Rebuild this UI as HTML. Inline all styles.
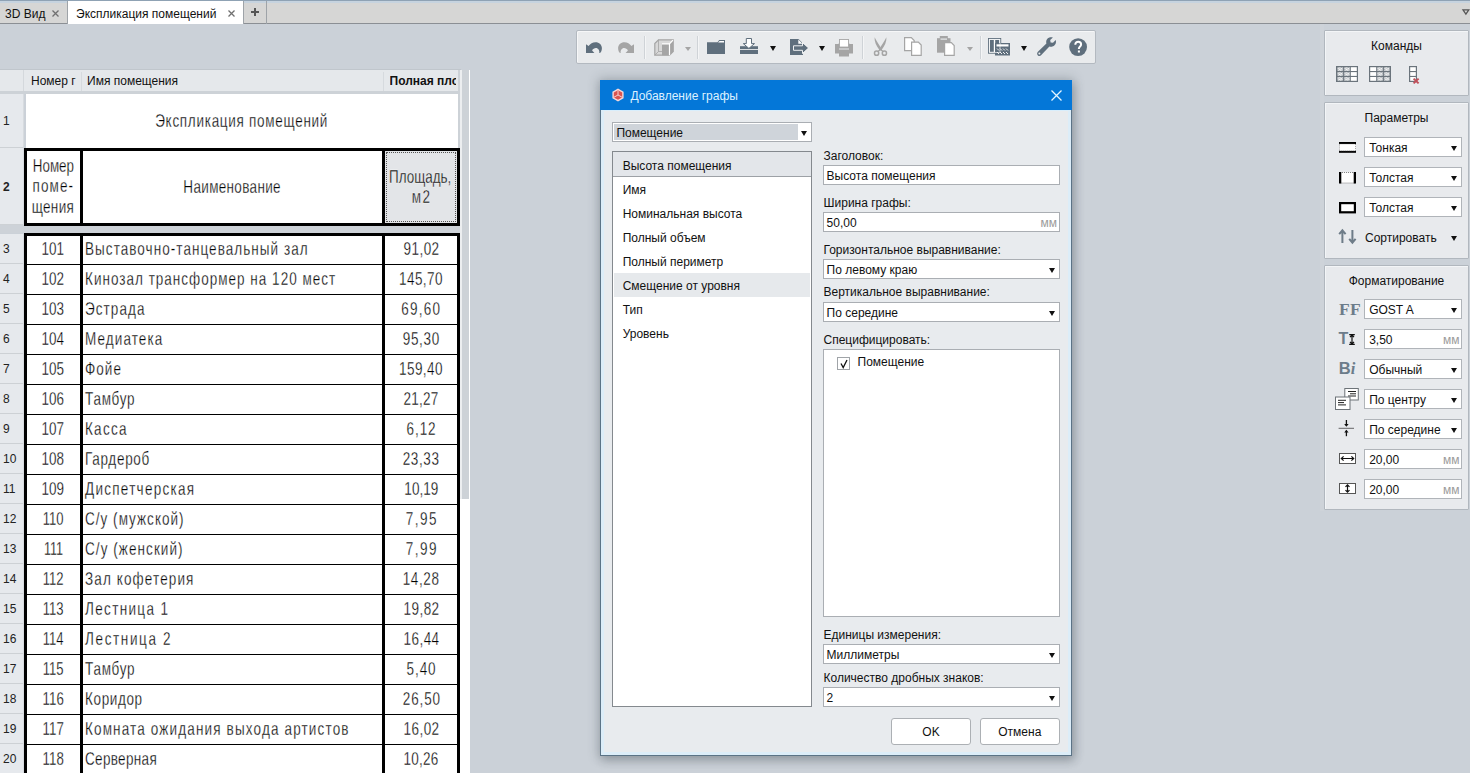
<!DOCTYPE html>
<html><head><meta charset="utf-8">
<style>
*{box-sizing:border-box;margin:0;padding:0}
html,body{width:1470px;height:773px;overflow:hidden}
body{background:#cbd1d8;font-family:"Liberation Sans",sans-serif;font-size:12px;color:#111;position:relative}
.a{position:absolute}
.t{position:absolute;white-space:nowrap;line-height:1}
svg{overflow:visible}
</style></head><body>

<div class="a" style="left:0px;top:0px;width:1470px;height:24px;background:#d6d6d5"></div>
<div class="a" style="left:0px;top:0px;width:1470px;height:1px;background:#8fa2b4"></div>
<div class="a" style="left:0px;top:1px;width:1470px;height:2px;background:#c6d3df"></div>
<div class="a" style="left:0px;top:23px;width:1470px;height:1px;background:#8b8f94"></div>
<div class="a" style="left:67px;top:1px;width:1px;height:23px;background:#9ea3a8"></div>
<div class="t " style="left:5px;top:7.84px;font-size:12px;color:#111;font-weight:normal;">3D Вид</div>
<svg class="a" style="left:52px;top:10px;" width="7" height="7" viewBox="0 0 7 7"><path d="M0.5 0.5L6.5 6.5M6.5 0.5L0.5 6.5" stroke="#707070" stroke-width="1.3"/></svg>
<div class="a" style="left:68px;top:1px;width:175px;height:23px;background:#fff"></div>
<div class="t " style="left:76px;top:7.84px;font-size:12px;color:#111;font-weight:normal;">Экспликация помещений</div>
<svg class="a" style="left:228px;top:10px;" width="7" height="7" viewBox="0 0 7 7"><path d="M0.5 0.5L6.5 6.5M6.5 0.5L0.5 6.5" stroke="#707070" stroke-width="1.3"/></svg>
<div class="a" style="left:243px;top:1px;width:1px;height:23px;background:#9ea3a8"></div>
<div class="a" style="left:266px;top:1px;width:1px;height:23px;background:#9ea3a8"></div>
<svg class="a" style="left:251px;top:8px;" width="8" height="8" viewBox="0 0 8 8"><path d="M4 0V8M0 4H8" stroke="#555" stroke-width="2"/></svg>
<svg class="a" style="left:1462px;top:9px;" width="8" height="6" viewBox="0 0 8 6"><path d="M1 0.9H6.8L3.9 5.2Z" fill="none" stroke="#555" stroke-width="1.3"/></svg>
<div class="a" style="left:0px;top:69px;width:461px;height:1px;background:#c0c6cc"></div>
<div class="a" style="left:0px;top:70px;width:458px;height:21px;background:#e5e8eb"></div>
<div class="a" style="left:0px;top:91px;width:458px;height:3px;background:#cdd2d7"></div>
<div class="a" style="left:23px;top:70px;width:1px;height:21px;background:#d4d8dc"></div>
<div class="a" style="left:81px;top:72px;width:1px;height:19px;background:#d6dade"></div>
<div class="a" style="left:383px;top:72px;width:1px;height:19px;background:#d6dade"></div>
<div class="t " style="left:31px;top:74.84px;font-size:12px;color:#111;font-weight:normal;">Номер г</div>
<div class="t " style="left:87px;top:74.84px;font-size:12px;color:#111;font-weight:normal;">Имя помещения</div>
<div class="t" style="left:389.5px;top:74.8px;width:66.5px;overflow:hidden;font-size:12px;font-weight:bold;color:#111">Полная площадь</div>
<div class="a" style="left:458px;top:70px;width:2px;height:703px;background:#cdd2d7"></div>
<div class="a" style="left:460px;top:70px;width:10px;height:703px;background:#fff"></div>
<div class="a" style="left:460px;top:70px;width:2px;height:429px;background:#eceef0"></div>
<div class="a" style="left:462px;top:70px;width:7px;height:429px;background:#cdd2d7"></div>
<div class="a" style="left:0px;top:94px;width:23px;height:54px;background:#e6e9ed"></div>
<div class="a" style="left:0px;top:147px;width:24px;height:1px;background:#cdd1d5"></div>
<div class="a" style="left:23px;top:94px;width:1px;height:54px;background:#d7dbdf"></div>
<div class="t " style="left:3px;top:115.14px;font-size:12px;color:#222;font-weight:normal;">1</div>
<div class="a" style="left:0px;top:148px;width:23px;height:77px;background:#e6e9ed"></div>
<div class="a" style="left:0px;top:224px;width:24px;height:1px;background:#cdd1d5"></div>
<div class="a" style="left:23px;top:148px;width:1px;height:77px;background:#d7dbdf"></div>
<div class="t " style="left:3px;top:180.64px;font-size:12px;color:#222;font-weight:bold;">2</div>
<div class="a" style="left:0px;top:225px;width:458px;height:8px;background:#cdd2d8"></div>
<div class="a" style="left:0px;top:234px;width:23px;height:30px;background:#e6e9ed"></div>
<div class="a" style="left:0px;top:263px;width:24px;height:1px;background:#cdd1d5"></div>
<div class="a" style="left:23px;top:234px;width:1px;height:30px;background:#d7dbdf"></div>
<div class="t " style="left:3px;top:243.14px;font-size:12px;color:#222;font-weight:normal;">3</div>
<div class="a" style="left:0px;top:264px;width:23px;height:30px;background:#e6e9ed"></div>
<div class="a" style="left:0px;top:293px;width:24px;height:1px;background:#cdd1d5"></div>
<div class="a" style="left:23px;top:264px;width:1px;height:30px;background:#d7dbdf"></div>
<div class="t " style="left:3px;top:273.14px;font-size:12px;color:#222;font-weight:normal;">4</div>
<div class="a" style="left:0px;top:294px;width:23px;height:30px;background:#e6e9ed"></div>
<div class="a" style="left:0px;top:323px;width:24px;height:1px;background:#cdd1d5"></div>
<div class="a" style="left:23px;top:294px;width:1px;height:30px;background:#d7dbdf"></div>
<div class="t " style="left:3px;top:303.14px;font-size:12px;color:#222;font-weight:normal;">5</div>
<div class="a" style="left:0px;top:324px;width:23px;height:30px;background:#e6e9ed"></div>
<div class="a" style="left:0px;top:353px;width:24px;height:1px;background:#cdd1d5"></div>
<div class="a" style="left:23px;top:324px;width:1px;height:30px;background:#d7dbdf"></div>
<div class="t " style="left:3px;top:333.14px;font-size:12px;color:#222;font-weight:normal;">6</div>
<div class="a" style="left:0px;top:354px;width:23px;height:30px;background:#e6e9ed"></div>
<div class="a" style="left:0px;top:383px;width:24px;height:1px;background:#cdd1d5"></div>
<div class="a" style="left:23px;top:354px;width:1px;height:30px;background:#d7dbdf"></div>
<div class="t " style="left:3px;top:363.14px;font-size:12px;color:#222;font-weight:normal;">7</div>
<div class="a" style="left:0px;top:384px;width:23px;height:30px;background:#e6e9ed"></div>
<div class="a" style="left:0px;top:413px;width:24px;height:1px;background:#cdd1d5"></div>
<div class="a" style="left:23px;top:384px;width:1px;height:30px;background:#d7dbdf"></div>
<div class="t " style="left:3px;top:393.14px;font-size:12px;color:#222;font-weight:normal;">8</div>
<div class="a" style="left:0px;top:414px;width:23px;height:30px;background:#e6e9ed"></div>
<div class="a" style="left:0px;top:443px;width:24px;height:1px;background:#cdd1d5"></div>
<div class="a" style="left:23px;top:414px;width:1px;height:30px;background:#d7dbdf"></div>
<div class="t " style="left:3px;top:423.14px;font-size:12px;color:#222;font-weight:normal;">9</div>
<div class="a" style="left:0px;top:444px;width:23px;height:30px;background:#e6e9ed"></div>
<div class="a" style="left:0px;top:473px;width:24px;height:1px;background:#cdd1d5"></div>
<div class="a" style="left:23px;top:444px;width:1px;height:30px;background:#d7dbdf"></div>
<div class="t " style="left:3px;top:453.14px;font-size:12px;color:#222;font-weight:normal;">10</div>
<div class="a" style="left:0px;top:474px;width:23px;height:30px;background:#e6e9ed"></div>
<div class="a" style="left:0px;top:503px;width:24px;height:1px;background:#cdd1d5"></div>
<div class="a" style="left:23px;top:474px;width:1px;height:30px;background:#d7dbdf"></div>
<div class="t " style="left:3px;top:483.14px;font-size:12px;color:#222;font-weight:normal;">11</div>
<div class="a" style="left:0px;top:504px;width:23px;height:30px;background:#e6e9ed"></div>
<div class="a" style="left:0px;top:533px;width:24px;height:1px;background:#cdd1d5"></div>
<div class="a" style="left:23px;top:504px;width:1px;height:30px;background:#d7dbdf"></div>
<div class="t " style="left:3px;top:513.14px;font-size:12px;color:#222;font-weight:normal;">12</div>
<div class="a" style="left:0px;top:534px;width:23px;height:30px;background:#e6e9ed"></div>
<div class="a" style="left:0px;top:563px;width:24px;height:1px;background:#cdd1d5"></div>
<div class="a" style="left:23px;top:534px;width:1px;height:30px;background:#d7dbdf"></div>
<div class="t " style="left:3px;top:543.14px;font-size:12px;color:#222;font-weight:normal;">13</div>
<div class="a" style="left:0px;top:564px;width:23px;height:30px;background:#e6e9ed"></div>
<div class="a" style="left:0px;top:593px;width:24px;height:1px;background:#cdd1d5"></div>
<div class="a" style="left:23px;top:564px;width:1px;height:30px;background:#d7dbdf"></div>
<div class="t " style="left:3px;top:573.14px;font-size:12px;color:#222;font-weight:normal;">14</div>
<div class="a" style="left:0px;top:594px;width:23px;height:30px;background:#e6e9ed"></div>
<div class="a" style="left:0px;top:623px;width:24px;height:1px;background:#cdd1d5"></div>
<div class="a" style="left:23px;top:594px;width:1px;height:30px;background:#d7dbdf"></div>
<div class="t " style="left:3px;top:603.14px;font-size:12px;color:#222;font-weight:normal;">15</div>
<div class="a" style="left:0px;top:624px;width:23px;height:30px;background:#e6e9ed"></div>
<div class="a" style="left:0px;top:653px;width:24px;height:1px;background:#cdd1d5"></div>
<div class="a" style="left:23px;top:624px;width:1px;height:30px;background:#d7dbdf"></div>
<div class="t " style="left:3px;top:633.14px;font-size:12px;color:#222;font-weight:normal;">16</div>
<div class="a" style="left:0px;top:654px;width:23px;height:30px;background:#e6e9ed"></div>
<div class="a" style="left:0px;top:683px;width:24px;height:1px;background:#cdd1d5"></div>
<div class="a" style="left:23px;top:654px;width:1px;height:30px;background:#d7dbdf"></div>
<div class="t " style="left:3px;top:663.14px;font-size:12px;color:#222;font-weight:normal;">17</div>
<div class="a" style="left:0px;top:684px;width:23px;height:30px;background:#e6e9ed"></div>
<div class="a" style="left:0px;top:713px;width:24px;height:1px;background:#cdd1d5"></div>
<div class="a" style="left:23px;top:684px;width:1px;height:30px;background:#d7dbdf"></div>
<div class="t " style="left:3px;top:693.14px;font-size:12px;color:#222;font-weight:normal;">18</div>
<div class="a" style="left:0px;top:714px;width:23px;height:30px;background:#e6e9ed"></div>
<div class="a" style="left:0px;top:743px;width:24px;height:1px;background:#cdd1d5"></div>
<div class="a" style="left:23px;top:714px;width:1px;height:30px;background:#d7dbdf"></div>
<div class="t " style="left:3px;top:723.14px;font-size:12px;color:#222;font-weight:normal;">19</div>
<div class="a" style="left:0px;top:744px;width:23px;height:30px;background:#e6e9ed"></div>
<div class="a" style="left:0px;top:773px;width:24px;height:1px;background:#cdd1d5"></div>
<div class="a" style="left:23px;top:744px;width:1px;height:30px;background:#d7dbdf"></div>
<div class="t " style="left:3px;top:753.14px;font-size:12px;color:#222;font-weight:normal;">20</div>
<div class="a" style="left:26px;top:94px;width:432px;height:54px;background:#fff"></div>
<div class="t" style="left:127.71px;top:113.43px;width:227.51px;font-size:17.8px;letter-spacing:0.931px;color:#000;-webkit-text-stroke:0.3px #fff;transform:scaleX(0.7600);transform-origin:113.29px 0">Экспликация помещений</div>
<div class="a" style="left:24px;top:148px;width:436px;height:78px;background:#fff"></div>
<div class="a" style="left:385px;top:151px;width:72px;height:72px;background:#e3e5e8"></div>
<div class="a" style="left:386px;top:152px;width:70px;height:70px;border:1px dotted #555"></div>
<div class="a" style="left:24px;top:148px;width:436px;height:3px;background:#000"></div>
<div class="a" style="left:24px;top:223px;width:436px;height:3px;background:#000"></div>
<div class="a" style="left:24px;top:148px;width:3px;height:78px;background:#000"></div>
<div class="a" style="left:457px;top:148px;width:3px;height:78px;background:#000"></div>
<div class="a" style="left:80px;top:148px;width:3px;height:78px;background:#000"></div>
<div class="a" style="left:382px;top:148px;width:3px;height:78px;background:#000"></div>
<div class="t" style="left:25.63px;top:158.13px;width:54.73px;font-size:17.8px;letter-spacing:0.000px;color:#000;-webkit-text-stroke:0.3px #fff;transform:scaleX(0.7527);transform-origin:27.37px 0">Номер</div>
<div class="t" style="left:26.22px;top:178.33px;width:55.05px;font-size:17.8px;letter-spacing:1.498px;color:#000;-webkit-text-stroke:0.3px #fff;transform:scaleX(0.7600);transform-origin:26.78px 0">поме-</div>
<div class="t" style="left:25.24px;top:198.53px;width:55.98px;font-size:17.8px;letter-spacing:0.456px;color:#000;-webkit-text-stroke:0.3px #fff;transform:scaleX(0.7600);transform-origin:27.76px 0">щения</div>
<div class="t" style="left:168.05px;top:178.93px;width:128.32px;font-size:17.8px;letter-spacing:0.421px;color:#000;-webkit-text-stroke:0.3px #fff;transform:scaleX(0.7600);transform-origin:63.95px 0">Наименование</div>
<div class="t" style="left:379.33px;top:169.13px;width:82.34px;font-size:17.8px;letter-spacing:0.000px;color:#000;-webkit-text-stroke:0.3px #fff;transform:scaleX(0.7554);transform-origin:41.17px 0">Площадь,</div>
<div class="t" style="left:409.03px;top:188.63px;width:25.77px;font-size:17.8px;letter-spacing:1.822px;color:#000;-webkit-text-stroke:0.3px #fff;transform:scaleX(0.7600);transform-origin:11.97px 0">м2</div>
<div class="a" style="left:24px;top:233px;width:436px;height:540px;background:#fff"></div>
<div class="a" style="left:24px;top:233px;width:436px;height:3px;background:#000"></div>
<div class="a" style="left:24px;top:233px;width:3px;height:540px;background:#000"></div>
<div class="a" style="left:457px;top:233px;width:3px;height:540px;background:#000"></div>
<div class="a" style="left:80px;top:233px;width:3px;height:540px;background:#000"></div>
<div class="a" style="left:382px;top:233px;width:3px;height:540px;background:#000"></div>
<div class="t" style="left:38.46px;top:241.43px;width:29.67px;font-size:17.8px;letter-spacing:0.000px;color:#000;-webkit-text-stroke:0.3px #fff;transform:scaleX(0.7583);transform-origin:14.84px 0">101</div>
<div class="t" style="left:84.9px;top:241.43px;font-size:17.8px;letter-spacing:1.378px;color:#000;-webkit-text-stroke:0.3px #fff;transform:scaleX(0.7600);transform-origin:0 0">Выставочно-танцевальный зал</div>
<div class="t" style="left:397.64px;top:241.43px;width:47.26px;font-size:17.8px;letter-spacing:0.553px;color:#000;-webkit-text-stroke:0.3px #fff;transform:scaleX(0.7600);transform-origin:23.36px 0">91,02</div>
<div class="a" style="left:27px;top:263.5px;width:430px;height:1.5px;background:#000"></div>
<div class="t" style="left:38.46px;top:271.43px;width:29.67px;font-size:17.8px;letter-spacing:0.000px;color:#000;-webkit-text-stroke:0.3px #fff;transform:scaleX(0.7583);transform-origin:14.84px 0">102</div>
<div class="t" style="left:84.9px;top:271.43px;font-size:17.8px;letter-spacing:1.322px;color:#000;-webkit-text-stroke:0.3px #fff;transform:scaleX(0.7600);transform-origin:0 0">Кинозал трансформер на 120 мест</div>
<div class="t" style="left:392.25px;top:271.43px;width:58.12px;font-size:17.8px;letter-spacing:0.622px;color:#000;-webkit-text-stroke:0.3px #fff;transform:scaleX(0.7600);transform-origin:28.75px 0">145,70</div>
<div class="a" style="left:27px;top:293.5px;width:430px;height:1.5px;background:#000"></div>
<div class="t" style="left:38.46px;top:301.43px;width:29.67px;font-size:17.8px;letter-spacing:0.000px;color:#000;-webkit-text-stroke:0.3px #fff;transform:scaleX(0.7583);transform-origin:14.84px 0">103</div>
<div class="t" style="left:84.9px;top:301.43px;font-size:17.8px;letter-spacing:1.383px;color:#000;-webkit-text-stroke:0.3px #fff;transform:scaleX(0.7600);transform-origin:0 0">Эстрада</div>
<div class="t" style="left:395.47px;top:301.43px;width:52.69px;font-size:17.8px;letter-spacing:1.638px;color:#000;-webkit-text-stroke:0.3px #fff;transform:scaleX(0.7600);transform-origin:25.53px 0">69,60</div>
<div class="a" style="left:27px;top:323.5px;width:430px;height:1.5px;background:#000"></div>
<div class="t" style="left:38.46px;top:331.43px;width:29.67px;font-size:17.8px;letter-spacing:0.000px;color:#000;-webkit-text-stroke:0.3px #fff;transform:scaleX(0.7583);transform-origin:14.84px 0">104</div>
<div class="t" style="left:84.9px;top:331.43px;font-size:17.8px;letter-spacing:1.436px;color:#000;-webkit-text-stroke:0.3px #fff;transform:scaleX(0.7600);transform-origin:0 0">Медиатека</div>
<div class="t" style="left:397.05px;top:331.43px;width:48.74px;font-size:17.8px;letter-spacing:0.849px;color:#000;-webkit-text-stroke:0.3px #fff;transform:scaleX(0.7600);transform-origin:23.95px 0">95,30</div>
<div class="a" style="left:27px;top:353.5px;width:430px;height:1.5px;background:#000"></div>
<div class="t" style="left:38.46px;top:361.43px;width:29.67px;font-size:17.8px;letter-spacing:0.000px;color:#000;-webkit-text-stroke:0.3px #fff;transform:scaleX(0.7583);transform-origin:14.84px 0">105</div>
<div class="t" style="left:84.9px;top:361.43px;font-size:17.8px;letter-spacing:1.334px;color:#000;-webkit-text-stroke:0.3px #fff;transform:scaleX(0.7600);transform-origin:0 0">Фойе</div>
<div class="t" style="left:392.25px;top:361.43px;width:58.12px;font-size:17.8px;letter-spacing:0.622px;color:#000;-webkit-text-stroke:0.3px #fff;transform:scaleX(0.7600);transform-origin:28.75px 0">159,40</div>
<div class="a" style="left:27px;top:383.5px;width:430px;height:1.5px;background:#000"></div>
<div class="t" style="left:38.46px;top:391.43px;width:29.67px;font-size:17.8px;letter-spacing:0.000px;color:#000;-webkit-text-stroke:0.3px #fff;transform:scaleX(0.7583);transform-origin:14.84px 0">106</div>
<div class="t" style="left:84.9px;top:391.43px;font-size:17.8px;letter-spacing:0.981px;color:#000;-webkit-text-stroke:0.3px #fff;transform:scaleX(0.7600);transform-origin:0 0">Тамбур</div>
<div class="t" style="left:398.11px;top:391.43px;width:46.11px;font-size:17.8px;letter-spacing:0.322px;color:#000;-webkit-text-stroke:0.3px #fff;transform:scaleX(0.7600);transform-origin:22.89px 0">21,27</div>
<div class="a" style="left:27px;top:413.5px;width:430px;height:1.5px;background:#000"></div>
<div class="t" style="left:38.46px;top:421.43px;width:29.67px;font-size:17.8px;letter-spacing:0.000px;color:#000;-webkit-text-stroke:0.3px #fff;transform:scaleX(0.7583);transform-origin:14.84px 0">107</div>
<div class="t" style="left:84.9px;top:421.43px;font-size:17.8px;letter-spacing:1.638px;color:#000;-webkit-text-stroke:0.3px #fff;transform:scaleX(0.7600);transform-origin:0 0">Касса</div>
<div class="t" style="left:401.92px;top:421.43px;width:39.34px;font-size:17.8px;letter-spacing:1.183px;color:#000;-webkit-text-stroke:0.3px #fff;transform:scaleX(0.7600);transform-origin:19.08px 0">6,12</div>
<div class="a" style="left:27px;top:443.5px;width:430px;height:1.5px;background:#000"></div>
<div class="t" style="left:38.46px;top:451.43px;width:29.67px;font-size:17.8px;letter-spacing:0.000px;color:#000;-webkit-text-stroke:0.3px #fff;transform:scaleX(0.7583);transform-origin:14.84px 0">108</div>
<div class="t" style="left:84.9px;top:451.43px;font-size:17.8px;letter-spacing:0.910px;color:#000;-webkit-text-stroke:0.3px #fff;transform:scaleX(0.7600);transform-origin:0 0">Гардероб</div>
<div class="t" style="left:397.18px;top:451.43px;width:48.41px;font-size:17.8px;letter-spacing:0.783px;color:#000;-webkit-text-stroke:0.3px #fff;transform:scaleX(0.7600);transform-origin:23.82px 0">23,33</div>
<div class="a" style="left:27px;top:473.5px;width:430px;height:1.5px;background:#000"></div>
<div class="t" style="left:38.46px;top:481.43px;width:29.67px;font-size:17.8px;letter-spacing:0.000px;color:#000;-webkit-text-stroke:0.3px #fff;transform:scaleX(0.7583);transform-origin:14.84px 0">109</div>
<div class="t" style="left:84.9px;top:481.43px;font-size:17.8px;letter-spacing:1.655px;color:#000;-webkit-text-stroke:0.3px #fff;transform:scaleX(0.7600);transform-origin:0 0">Диспетчерская</div>
<div class="t" style="left:398.70px;top:481.43px;width:44.63px;font-size:17.8px;letter-spacing:0.026px;color:#000;-webkit-text-stroke:0.3px #fff;transform:scaleX(0.7600);transform-origin:22.30px 0">10,19</div>
<div class="a" style="left:27px;top:503.5px;width:430px;height:1.5px;background:#000"></div>
<div class="t" style="left:39.12px;top:511.43px;width:28.36px;font-size:17.8px;letter-spacing:0.000px;color:#000;-webkit-text-stroke:0.3px #fff;transform:scaleX(0.7334);transform-origin:14.18px 0">110</div>
<div class="t" style="left:84.9px;top:511.43px;font-size:17.8px;letter-spacing:1.348px;color:#000;-webkit-text-stroke:0.3px #fff;transform:scaleX(0.7600);transform-origin:0 0">С/у (мужской)</div>
<div class="t" style="left:400.87px;top:511.43px;width:42.15px;font-size:17.8px;letter-spacing:1.885px;color:#000;-webkit-text-stroke:0.3px #fff;transform:scaleX(0.7600);transform-origin:20.13px 0">7,95</div>
<div class="a" style="left:27px;top:533.5px;width:430px;height:1.5px;background:#000"></div>
<div class="t" style="left:39.78px;top:541.43px;width:27.03px;font-size:17.8px;letter-spacing:0.000px;color:#000;-webkit-text-stroke:0.3px #fff;transform:scaleX(0.7103);transform-origin:13.52px 0">111</div>
<div class="t" style="left:84.9px;top:541.43px;font-size:17.8px;letter-spacing:1.402px;color:#000;-webkit-text-stroke:0.3px #fff;transform:scaleX(0.7600);transform-origin:0 0">С/у (женский)</div>
<div class="t" style="left:400.87px;top:541.43px;width:42.15px;font-size:17.8px;letter-spacing:1.885px;color:#000;-webkit-text-stroke:0.3px #fff;transform:scaleX(0.7600);transform-origin:20.13px 0">7,99</div>
<div class="a" style="left:27px;top:563.5px;width:430px;height:1.5px;background:#000"></div>
<div class="t" style="left:39.12px;top:571.43px;width:28.36px;font-size:17.8px;letter-spacing:0.000px;color:#000;-webkit-text-stroke:0.3px #fff;transform:scaleX(0.7334);transform-origin:14.18px 0">112</div>
<div class="t" style="left:84.9px;top:571.43px;font-size:17.8px;letter-spacing:1.467px;color:#000;-webkit-text-stroke:0.3px #fff;transform:scaleX(0.7600);transform-origin:0 0">Зал кофетерия</div>
<div class="t" style="left:397.18px;top:571.43px;width:48.41px;font-size:17.8px;letter-spacing:0.783px;color:#000;-webkit-text-stroke:0.3px #fff;transform:scaleX(0.7600);transform-origin:23.82px 0">14,28</div>
<div class="a" style="left:27px;top:593.5px;width:430px;height:1.5px;background:#000"></div>
<div class="t" style="left:39.12px;top:601.43px;width:28.36px;font-size:17.8px;letter-spacing:0.000px;color:#000;-webkit-text-stroke:0.3px #fff;transform:scaleX(0.7334);transform-origin:14.18px 0">113</div>
<div class="t" style="left:84.9px;top:601.43px;font-size:17.8px;letter-spacing:1.759px;color:#000;-webkit-text-stroke:0.3px #fff;transform:scaleX(0.7600);transform-origin:0 0">Лестница 1</div>
<div class="t" style="left:397.64px;top:601.43px;width:47.26px;font-size:17.8px;letter-spacing:0.553px;color:#000;-webkit-text-stroke:0.3px #fff;transform:scaleX(0.7600);transform-origin:23.36px 0">19,82</div>
<div class="a" style="left:27px;top:623.5px;width:430px;height:1.5px;background:#000"></div>
<div class="t" style="left:39.12px;top:631.43px;width:28.36px;font-size:17.8px;letter-spacing:0.000px;color:#000;-webkit-text-stroke:0.3px #fff;transform:scaleX(0.7334);transform-origin:14.18px 0">114</div>
<div class="t" style="left:84.9px;top:631.43px;font-size:17.8px;letter-spacing:2.139px;color:#000;-webkit-text-stroke:0.3px #fff;transform:scaleX(0.7600);transform-origin:0 0">Лестница 2</div>
<div class="t" style="left:397.64px;top:631.43px;width:47.26px;font-size:17.8px;letter-spacing:0.553px;color:#000;-webkit-text-stroke:0.3px #fff;transform:scaleX(0.7600);transform-origin:23.36px 0">16,44</div>
<div class="a" style="left:27px;top:653.5px;width:430px;height:1.5px;background:#000"></div>
<div class="t" style="left:39.12px;top:661.43px;width:28.36px;font-size:17.8px;letter-spacing:0.000px;color:#000;-webkit-text-stroke:0.3px #fff;transform:scaleX(0.7334);transform-origin:14.18px 0">115</div>
<div class="t" style="left:84.9px;top:661.43px;font-size:17.8px;letter-spacing:0.981px;color:#000;-webkit-text-stroke:0.3px #fff;transform:scaleX(0.7600);transform-origin:0 0">Тамбур</div>
<div class="t" style="left:401.92px;top:661.43px;width:39.34px;font-size:17.8px;letter-spacing:1.183px;color:#000;-webkit-text-stroke:0.3px #fff;transform:scaleX(0.7600);transform-origin:19.08px 0">5,40</div>
<div class="a" style="left:27px;top:683.5px;width:430px;height:1.5px;background:#000"></div>
<div class="t" style="left:39.12px;top:691.43px;width:28.36px;font-size:17.8px;letter-spacing:0.000px;color:#000;-webkit-text-stroke:0.3px #fff;transform:scaleX(0.7475);transform-origin:14.18px 0">116</div>
<div class="t" style="left:84.9px;top:691.43px;font-size:17.8px;letter-spacing:0.816px;color:#000;-webkit-text-stroke:0.3px #fff;transform:scaleX(0.7600);transform-origin:0 0">Коридор</div>
<div class="t" style="left:396.53px;top:691.43px;width:50.06px;font-size:17.8px;letter-spacing:1.112px;color:#000;-webkit-text-stroke:0.3px #fff;transform:scaleX(0.7600);transform-origin:24.47px 0">26,50</div>
<div class="a" style="left:27px;top:713.5px;width:430px;height:1.5px;background:#000"></div>
<div class="t" style="left:39.12px;top:721.43px;width:28.36px;font-size:17.8px;letter-spacing:0.000px;color:#000;-webkit-text-stroke:0.3px #fff;transform:scaleX(0.7475);transform-origin:14.18px 0">117</div>
<div class="t" style="left:84.9px;top:721.43px;font-size:17.8px;letter-spacing:1.509px;color:#000;-webkit-text-stroke:0.3px #fff;transform:scaleX(0.7600);transform-origin:0 0">Комната ожидания выхода артистов</div>
<div class="t" style="left:397.64px;top:721.43px;width:47.26px;font-size:17.8px;letter-spacing:0.553px;color:#000;-webkit-text-stroke:0.3px #fff;transform:scaleX(0.7600);transform-origin:23.36px 0">16,02</div>
<div class="a" style="left:27px;top:743.5px;width:430px;height:1.5px;background:#000"></div>
<div class="t" style="left:39.12px;top:751.43px;width:28.36px;font-size:17.8px;letter-spacing:0.000px;color:#000;-webkit-text-stroke:0.3px #fff;transform:scaleX(0.7475);transform-origin:14.18px 0">118</div>
<div class="t" style="left:84.9px;top:751.43px;font-size:17.8px;letter-spacing:0.420px;color:#000;-webkit-text-stroke:0.3px #fff;transform:scaleX(0.7600);transform-origin:0 0">Серверная</div>
<div class="t" style="left:398.11px;top:751.43px;width:46.11px;font-size:17.8px;letter-spacing:0.322px;color:#000;-webkit-text-stroke:0.3px #fff;transform:scaleX(0.7600);transform-origin:22.89px 0">10,26</div>
<div class="a" style="left:576px;top:30px;width:520px;height:34px;background:#e9ebed;border:1px solid #b3b9c0;border-radius:2px;box-shadow:inset 1px 1px 0 #f6f7f8"></div>
<div class="a" style="left:644px;top:36px;width:1px;height:23px;background:#cfd3d7"></div>
<div class="a" style="left:645px;top:36px;width:1px;height:23px;background:#f4f5f6"></div>
<div class="a" style="left:697px;top:36px;width:1px;height:23px;background:#cfd3d7"></div>
<div class="a" style="left:698px;top:36px;width:1px;height:23px;background:#f4f5f6"></div>
<div class="a" style="left:862px;top:36px;width:1px;height:23px;background:#cfd3d7"></div>
<div class="a" style="left:863px;top:36px;width:1px;height:23px;background:#f4f5f6"></div>
<div class="a" style="left:980px;top:36px;width:1px;height:23px;background:#cfd3d7"></div>
<div class="a" style="left:981px;top:36px;width:1px;height:23px;background:#f4f5f6"></div>
<svg class="a" style="left:586px;top:41.8px;" width="16" height="12" viewBox="0 0 16 12"><path d="M0 2.3 L2.6 4 C4.3 1.5 6.6 0.2 9.5 0.2 C13.3 0.2 15.9 2.8 15.9 6.2 C15.9 8.4 15 10.2 14 11.1 L13.3 11.1 C13.7 8.6 12.2 6.1 9.9 6.1 C8.3 6.1 7 7 6.1 8.4 L8.4 11.1 L0 11.1 Z" fill="#5f6f7d"/></svg>
<svg class="a" style="left:618px;top:41.8px;" width="16" height="12" viewBox="0 0 16 12"><g transform="translate(16,0) scale(-1,1)"><path d="M0 2.3 L2.6 4 C4.3 1.5 6.6 0.2 9.5 0.2 C13.3 0.2 15.9 2.8 15.9 6.2 C15.9 8.4 15 10.2 14 11.1 L13.3 11.1 C13.7 8.6 12.2 6.1 9.9 6.1 C8.3 6.1 7 7 6.1 8.4 L8.4 11.1 L0 11.1 Z" fill="#a5a5a5"/></g></svg>
<svg class="a" style="left:654px;top:39px;" width="20" height="17" viewBox="0 0 20 17"><path d="M0.8 4.5 L4.5 0.8 L19.2 0.8 L19.2 12.5 L15.5 16.2 L0.8 16.2 Z" fill="#d8d8d8" stroke="#a5a5a5" stroke-width="1.2"/><path d="M4.5 0.8 L4.5 12.5 L0.8 16.2 M4.5 12.5 L19.2 12.5" stroke="#a5a5a5" stroke-width="0.8" fill="none"/><path d="M8 5 L15.5 5 L19.2 1 L19.2 12.5 L15.5 16.2 L8 16.2 Z" fill="#a5a5a5"/><path d="M8 4.8 H15.5 V16.2 M15.5 4.8 L19 1.2" stroke="#fff" stroke-width="1.2" fill="none"/></svg>
<svg class="a" style="left:685px;top:47px;" width="7" height="4" viewBox="0 0 7 4"><path d="M0 0H6L3 4Z" fill="#a5a5a5"/></svg>
<svg class="a" style="left:707px;top:40px;" width="18" height="14" viewBox="0 0 18 14"><path d="M0 2.2 H10.5 L12.2 0 H18 V14 H0 Z" fill="#5f6f7d"/><path d="M11.2 2.2 L12.6 1.1 H17 V2.6 H11.2Z" fill="#fff"/></svg>
<svg class="a" style="left:740px;top:38px;" width="18" height="16" viewBox="0 0 18 16"><path d="M0 8.2 H18 V16 H0 Z" fill="#5f6f7d"/><rect x="0" y="11" width="18" height="0.9" fill="#e9ebed"/><path d="M6.3 0.5 H11.5 V5.6 H14.5 L8.9 10.4 L3.3 5.6 H6.3 Z" fill="#fff" stroke="#5f6f7d" stroke-width="1"/></svg>
<svg class="a" style="left:770px;top:46px;" width="6" height="5" viewBox="0 0 6 5"><path d="M0 0H6L3 5Z" fill="#111"/></svg>
<svg class="a" style="left:790px;top:39px;" width="19" height="16" viewBox="0 0 19 16"><path d="M0 0 H8.5 L13 4.5 V16 H0 Z" fill="#5f6f7d"/><path d="M8.3 0.6 L12.4 4.7 H8.3Z" fill="#fff"/><path d="M3.5 6.8 H12.5 V3.5 L18.6 9 L12.5 14.5 V11.3 H3.5 Z" fill="#5f6f7d" stroke="#fff" stroke-width="0.9"/></svg>
<svg class="a" style="left:819px;top:46px;" width="6" height="5" viewBox="0 0 6 5"><path d="M0 0H6L3 5Z" fill="#111"/></svg>
<svg class="a" style="left:835px;top:39px;" width="18" height="18" viewBox="0 0 18 18"><rect x="4.5" y="0.5" width="9" height="8" fill="#fff" stroke="#a5a5a5" stroke-width="1"/><path d="M0 5 H3 V4.8 H15 V5 H18 V14.5 H0Z" fill="#a5a5a5"/><rect x="4.5" y="0.5" width="9" height="7.5" fill="#fff" stroke="#a5a5a5" stroke-width="0.8"/><rect x="4" y="9.5" width="10" height="1" fill="#e9ebed"/><rect x="4" y="13" width="10" height="4.5" fill="#a5a5a5"/></svg>
<svg class="a" style="left:873px;top:37px;" width="15" height="19" viewBox="0 0 15 19"><path d="M1.6 0.3 C1.2 4.2 3.2 9 6.8 13.6 L8.9 12.5 C6.4 8 3.6 4.5 1.6 0.3Z" fill="#a5a5a5"/><path d="M13.4 0.3 C13.8 4.2 11.8 9 8.2 13.6 L6.1 12.5 C8.6 8 11.4 4.5 13.4 0.3Z" fill="#a5a5a5"/><path d="M7.5 12.6 L4.8 14.6 M7.5 12.6 L10.2 14.6" stroke="#a5a5a5" stroke-width="1.3"/><circle cx="3.6" cy="16.2" r="2.1" fill="none" stroke="#a5a5a5" stroke-width="1.5"/><circle cx="11.4" cy="16.2" r="2.1" fill="none" stroke="#a5a5a5" stroke-width="1.5"/></svg>
<svg class="a" style="left:904px;top:37px;" width="18" height="19" viewBox="0 0 18 19"><path d="M0.6 0.6 H7.3 L10.2 3.5 V13.6 H0.6Z" fill="#fff" stroke="#a5a5a5" stroke-width="1.2"/><path d="M7.6 5.2 H14.3 L17.2 8.1 V18.4 H7.6Z" fill="#fff" stroke="#a5a5a5" stroke-width="1.2"/></svg>
<svg class="a" style="left:937px;top:36px;" width="18" height="20" viewBox="0 0 18 20"><rect x="0" y="2.2" width="13.5" height="14.5" fill="#a5a5a5"/><rect x="2.8" y="0" width="8" height="3.5" fill="#a5a5a5"/><rect x="3.5" y="2.5" width="6.5" height="1.2" fill="#e9ebed"/><path d="M7.6 6.6 H14.3 L17.2 9.5 V19.4 H7.6Z" fill="#fff" stroke="#a5a5a5" stroke-width="1.2"/></svg>
<svg class="a" style="left:967px;top:47px;" width="7" height="4" viewBox="0 0 7 4"><path d="M0 0H6L3 4Z" fill="#a5a5a5"/></svg>
<svg class="a" style="left:988px;top:38px;" width="23" height="18" viewBox="0 0 23 18"><rect x="0.6" y="0.6" width="12" height="14.5" fill="#fff" stroke="#5f6f7d" stroke-width="1.2"/><rect x="2" y="2" width="3.8" height="11.8" fill="#5f6f7d"/><rect x="7.2" y="2" width="4" height="5.3" fill="#5f6f7d"/><rect x="7.2" y="8.5" width="4" height="5.3" fill="#5f6f7d"/><rect x="7" y="5" width="15" height="12.5" fill="#5f6f7d"/><rect x="8.5" y="6.3" width="12" height="2.2" fill="#fff"/><path d="M9 10.5 l2 2 M12 10.5 l2 2 M15 10.5 l2 2 M18 10.5 l2 2 M9 14 l2 2 M12 14 l2 2 M15 14 l2 2 M18 14 l2 2" stroke="#fff" stroke-width="0.9"/><rect x="1.2" y="1.2" width="10.8" height="13.3" fill="none" stroke="#fff" stroke-width="0.6"/></svg>
<svg class="a" style="left:1021px;top:46px;" width="6" height="5" viewBox="0 0 6 5"><path d="M0 0H6L3 5Z" fill="#111"/></svg>
<svg class="a" style="left:1037px;top:37px;" width="19" height="19" viewBox="0 0 19 19"><path d="M14 0.2 C11 0.2 9.1 2.4 9.2 5.2 C9.2 5.7 9.3 6.2 9.4 6.6 L0.9 14.8 C-0.2 15.9 -0.1 17.6 0.9 18.4 C1.9 19.3 3.4 19.1 4.3 18.1 L12.4 9.5 C12.9 9.7 13.4 9.8 14 9.8 C16.8 9.8 19 7.6 19 4.8 C19 4.2 18.9 3.6 18.7 3.1 L16 5.8 L13.6 5.4 L13.2 3 L15.9 0.4 C15.3 0.2 14.7 0.2 14 0.2Z" fill="#5f6f7d"/><circle cx="2.4" cy="16.6" r="1" fill="#e9ebed"/></svg>
<svg class="a" style="left:1069px;top:38px;" width="18" height="18" viewBox="0 0 18 18"><circle cx="9.1" cy="9.1" r="8.9" fill="#5f6f7d"/><path d="M6.3 6.8 C6.3 4.9 7.6 3.8 9.2 3.8 C10.9 3.8 12.1 4.9 12.1 6.4 C12.1 8.4 9.9 8.6 9.9 10.6 V11" stroke="#fff" stroke-width="2" fill="none"/><rect x="8.9" y="12.5" width="2" height="2" fill="#fff"/></svg>
<div class="a" style="left:600px;top:80px;width:472px;height:676px;box-shadow:0 0 10px 2px rgba(60,70,80,.25), 2px 5px 9px rgba(40,50,60,.22)"></div>
<div class="a" style="left:600px;top:80px;width:472px;height:676px;background:#e8ebee;border:1px solid #5b7386;border-top:none"></div>
<div class="a" style="left:601px;top:110px;width:470px;height:1px;background:#d8eefc"></div>
<div class="a" style="left:601px;top:110px;width:3px;height:645px;background:#dcedf8"></div>
<div class="a" style="left:1068px;top:110px;width:3px;height:645px;background:#dcedf8"></div>
<div class="a" style="left:601px;top:752px;width:470px;height:3px;background:#dcedf8"></div>
<div class="a" style="left:600px;top:80px;width:472px;height:30px;background:#0477d8"></div>
<svg class="a" style="left:611px;top:88px;" width="14" height="14" viewBox="0 0 14 14"><path d="M7 0.6 L12.6 3.8 V10.2 L7 13.4 L1.4 10.2 V3.8 Z" fill="#f8d8d8"/><path d="M7 2.2 L11.2 4.6 V9.4 L7 11.8 L2.8 9.4 V4.6Z" fill="#d9534f"/><path d="M7 7 V2.6 M7 7 L3 9.2 M7 7 L11 9.2" stroke="#f6dede" stroke-width="0.9"/></svg>
<div class="t " style="left:630.4px;top:89.74px;font-size:12px;color:#dcf1ff;font-weight:normal;">Добавление графы</div>
<svg class="a" style="left:1050.5px;top:89.5px;" width="11" height="11" viewBox="0 0 11 11"><path d="M0.5 0.5 L10.5 10.5 M10.5 0.5 L0.5 10.5" stroke="#e6f5ff" stroke-width="1.3"/></svg>
<div class="a" style="left:612px;top:122px;width:200px;height:20px;background:#fff;border:1px solid #aaaeb3"></div>
<div class="a" style="left:614px;top:124px;width:184px;height:16px;background:#cfd4da"></div>
<div class="t " style="left:616.4px;top:126.74px;font-size:12px;color:#111;font-weight:normal;">Помещение</div>
<svg class="a" style="left:801px;top:130.5px;" width="6" height="5" viewBox="0 0 6 5"><path d="M0 0H6L3 5Z" fill="#111"/></svg>
<div class="a" style="left:612px;top:151px;width:200px;height:556px;background:#fff;border:1px solid #84898e"></div>
<div class="a" style="left:613px;top:152px;width:198px;height:24px;background:#e3e6ea"></div>
<div class="a" style="left:613px;top:176px;width:198px;height:1px;background:#9da1a6"></div>
<div class="a" style="left:614px;top:273px;width:196px;height:24px;background:#e6e9ec"></div>
<div class="t " style="left:622.7px;top:160.34px;font-size:12px;color:#111;font-weight:normal;">Высота помещения</div>
<div class="t " style="left:622.7px;top:184.34px;font-size:12px;color:#111;font-weight:normal;">Имя</div>
<div class="t " style="left:622.7px;top:208.34px;font-size:12px;color:#111;font-weight:normal;">Номинальная высота</div>
<div class="t " style="left:622.7px;top:232.34px;font-size:12px;color:#111;font-weight:normal;">Полный объем</div>
<div class="t " style="left:622.7px;top:256.34px;font-size:12px;color:#111;font-weight:normal;">Полный периметр</div>
<div class="t " style="left:622.7px;top:280.34px;font-size:12px;color:#111;font-weight:normal;">Смещение от уровня</div>
<div class="t " style="left:622.7px;top:304.34px;font-size:12px;color:#111;font-weight:normal;">Тип</div>
<div class="t " style="left:622.7px;top:328.34px;font-size:12px;color:#111;font-weight:normal;">Уровень</div>
<div class="t " style="left:823.5px;top:149.64px;font-size:12px;color:#111;font-weight:normal;">Заголовок:</div>
<div class="a" style="left:823px;top:165px;width:237px;height:20px;background:#fff;border:1px solid #aaaeb3"></div>
<div class="t " style="left:826.6px;top:169.54px;font-size:12px;color:#111;font-weight:normal;">Высота помещения</div>
<div class="t " style="left:823.5px;top:196.84px;font-size:12px;color:#111;font-weight:normal;">Ширина графы:</div>
<div class="a" style="left:823px;top:212px;width:237px;height:20px;background:#fff;border:1px solid #aaaeb3"></div>
<div class="t " style="left:826.6px;top:216.54px;font-size:12px;color:#111;font-weight:normal;">50,00</div>
<div class="t" style="left:657px;top:216.54px;width:400px;text-align:right;font-size:12px;color:#9b9b9b;font-weight:normal;">мм</div>
<div class="t " style="left:823.5px;top:243.84px;font-size:12px;color:#111;font-weight:normal;">Горизонтальное выравнивание:</div>
<div class="a" style="left:823px;top:259px;width:237px;height:20px;background:#fff;border:1px solid #aaaeb3"></div>
<div class="t " style="left:826.6px;top:263.74px;font-size:12px;color:#111;font-weight:normal;">По левому краю</div>
<svg class="a" style="left:1049px;top:267.5px;" width="6" height="5" viewBox="0 0 6 5"><path d="M0 0H6L3 5Z" fill="#111"/></svg>
<div class="t " style="left:823.5px;top:286.44px;font-size:12px;color:#111;font-weight:normal;">Вертикальное выравнивание:</div>
<div class="a" style="left:823px;top:302px;width:237px;height:20px;background:#fff;border:1px solid #aaaeb3"></div>
<div class="t " style="left:826.6px;top:306.74px;font-size:12px;color:#111;font-weight:normal;">По середине</div>
<svg class="a" style="left:1049px;top:310.5px;" width="6" height="5" viewBox="0 0 6 5"><path d="M0 0H6L3 5Z" fill="#111"/></svg>
<div class="t " style="left:823.5px;top:333.54px;font-size:12px;color:#111;font-weight:normal;">Специфицировать:</div>
<div class="a" style="left:823px;top:349px;width:237px;height:268px;background:#fff;border:1px solid #aaaeb3"></div>
<div class="a" style="left:837px;top:357px;width:13px;height:13px;background:#fff;border:1px solid #a0a4a8"></div>
<svg class="a" style="left:838.5px;top:358.5px;" width="10" height="10" viewBox="0 0 10 10"><path d="M2 4.5 L4.2 8.5 L8 1" stroke="#111" stroke-width="1.3" fill="none"/></svg>
<div class="t " style="left:857.5px;top:356.14px;font-size:12px;color:#111;font-weight:normal;">Помещение</div>
<div class="t " style="left:823.5px;top:628.64px;font-size:12px;color:#111;font-weight:normal;">Единицы измерения:</div>
<div class="a" style="left:823px;top:644px;width:237px;height:20px;background:#fff;border:1px solid #aaaeb3"></div>
<div class="t " style="left:826.6px;top:648.74px;font-size:12px;color:#111;font-weight:normal;">Миллиметры</div>
<svg class="a" style="left:1049px;top:652.5px;" width="6" height="5" viewBox="0 0 6 5"><path d="M0 0H6L3 5Z" fill="#111"/></svg>
<div class="t " style="left:823.5px;top:671.54px;font-size:12px;color:#111;font-weight:normal;">Количество дробных знаков:</div>
<div class="a" style="left:823px;top:687px;width:237px;height:20px;background:#fff;border:1px solid #aaaeb3"></div>
<div class="t " style="left:826.6px;top:691.74px;font-size:12px;color:#111;font-weight:normal;">2</div>
<svg class="a" style="left:1049px;top:695.5px;" width="6" height="5" viewBox="0 0 6 5"><path d="M0 0H6L3 5Z" fill="#111"/></svg>
<div class="a" style="left:891px;top:718px;width:80px;height:27px;background:#fff;border:1px solid #acb0b4;border-radius:3px"></div>
<div class="a" style="left:980px;top:718px;width:80px;height:27px;background:#fff;border:1px solid #acb0b4;border-radius:3px"></div>
<div class="t" style="left:891.0px;top:725.54px;width:80px;text-align:center;font-size:12px;color:#111;font-weight:normal;">OK</div>
<div class="t" style="left:979.8px;top:725.54px;width:80px;text-align:center;font-size:12px;color:#111;font-weight:normal;">Отмена</div>
<div class="a" style="left:1320px;top:24px;width:4px;height:487px;background:#ced3d9"></div>
<div class="a" style="left:1324px;top:30px;width:145px;height:66px;background:#e8eaed;border:1px solid #b1b7be;border-radius:1px;box-shadow:inset 1px 1px 0 #f3f5f7"></div>
<div class="a" style="left:1324px;top:102px;width:145px;height:157px;background:#e8eaed;border:1px solid #b1b7be;border-radius:1px;box-shadow:inset 1px 1px 0 #f3f5f7"></div>
<div class="a" style="left:1324px;top:265px;width:145px;height:245px;background:#e8eaed;border:1px solid #b1b7be;border-radius:1px;box-shadow:inset 1px 1px 0 #f3f5f7"></div>
<div class="t" style="left:1326.5px;top:40.14px;width:140px;text-align:center;font-size:12px;color:#111;font-weight:normal;">Команды</div>
<svg class="a" style="left:1336px;top:66px;" width="22" height="16" viewBox="0 0 22 16"><rect x="0" y="0" width="22" height="16" fill="#6b747c"/><rect x="1.2" y="1.2" width="6" height="3.8" fill="#a9aeb3"/><path d="M2.0 4.4 L6.6000000000000005 2.0 M3.8 4.4 L6.6000000000000005 3.8 M1.7999999999999998 2.4 L4.6 1.7999999999999998" stroke="#fff" stroke-width="0.9"/><rect x="1.2" y="6.1" width="6" height="3.8" fill="#a9aeb3"/><path d="M2.0 9.299999999999999 L6.6000000000000005 6.8999999999999995 M3.8 9.299999999999999 L6.6000000000000005 8.7 M1.7999999999999998 7.299999999999999 L4.6 6.699999999999999" stroke="#fff" stroke-width="0.9"/><rect x="1.2" y="11" width="6" height="3.8" fill="#a9aeb3"/><path d="M2.0 14.200000000000001 L6.6000000000000005 11.8 M3.8 14.200000000000001 L6.6000000000000005 13.6 M1.7999999999999998 12.200000000000001 L4.6 11.6" stroke="#fff" stroke-width="0.9"/><rect x="8" y="1.2" width="6" height="3.8" fill="#a9aeb3"/><path d="M8.8 4.4 L13.4 2.0 M10.6 4.4 L13.4 3.8 M8.6 2.4 L11.4 1.7999999999999998" stroke="#fff" stroke-width="0.9"/><rect x="8" y="6.1" width="6" height="3.8" fill="#a9aeb3"/><path d="M8.8 9.299999999999999 L13.4 6.8999999999999995 M10.6 9.299999999999999 L13.4 8.7 M8.6 7.299999999999999 L11.4 6.699999999999999" stroke="#fff" stroke-width="0.9"/><rect x="8" y="11" width="6" height="3.8" fill="#a9aeb3"/><path d="M8.8 14.200000000000001 L13.4 11.8 M10.6 14.200000000000001 L13.4 13.6 M8.6 12.200000000000001 L11.4 11.6" stroke="#fff" stroke-width="0.9"/><rect x="14.8" y="1.2" width="6" height="3.8" fill="#fff"/><rect x="14.8" y="6.1" width="6" height="3.8" fill="#fff"/><rect x="14.8" y="11" width="6" height="3.8" fill="#fff"/></svg>
<svg class="a" style="left:1369px;top:66px;" width="22" height="16" viewBox="0 0 22 16"><rect x="0" y="0" width="22" height="16" fill="#6b747c"/><rect x="1.2" y="1.2" width="6" height="3.8" fill="#fff"/><rect x="1.2" y="6.1" width="6" height="3.8" fill="#fff"/><rect x="1.2" y="11" width="6" height="3.8" fill="#fff"/><rect x="8" y="1.2" width="6" height="3.8" fill="#a9aeb3"/><path d="M8.8 4.4 L13.4 2.0 M10.6 4.4 L13.4 3.8 M8.6 2.4 L11.4 1.7999999999999998" stroke="#fff" stroke-width="0.9"/><rect x="8" y="6.1" width="6" height="3.8" fill="#a9aeb3"/><path d="M8.8 9.299999999999999 L13.4 6.8999999999999995 M10.6 9.299999999999999 L13.4 8.7 M8.6 7.299999999999999 L11.4 6.699999999999999" stroke="#fff" stroke-width="0.9"/><rect x="8" y="11" width="6" height="3.8" fill="#a9aeb3"/><path d="M8.8 14.200000000000001 L13.4 11.8 M10.6 14.200000000000001 L13.4 13.6 M8.6 12.200000000000001 L11.4 11.6" stroke="#fff" stroke-width="0.9"/><rect x="14.8" y="1.2" width="6" height="3.8" fill="#a9aeb3"/><path d="M15.600000000000001 4.4 L20.2 2.0 M17.400000000000002 4.4 L20.2 3.8 M15.4 2.4 L18.2 1.7999999999999998" stroke="#fff" stroke-width="0.9"/><rect x="14.8" y="6.1" width="6" height="3.8" fill="#a9aeb3"/><path d="M15.600000000000001 9.299999999999999 L20.2 6.8999999999999995 M17.400000000000002 9.299999999999999 L20.2 8.7 M15.4 7.299999999999999 L18.2 6.699999999999999" stroke="#fff" stroke-width="0.9"/><rect x="14.8" y="11" width="6" height="3.8" fill="#a9aeb3"/><path d="M15.600000000000001 14.200000000000001 L20.2 11.8 M17.400000000000002 14.200000000000001 L20.2 13.6 M15.4 12.200000000000001 L18.2 11.6" stroke="#fff" stroke-width="0.9"/></svg>
<svg class="a" style="left:1409px;top:66px;" width="11" height="18" viewBox="0 0 11 18"><rect x="0" y="0" width="8" height="16" fill="#6b747c"/><rect x="1.2" y="1.2" width="5.6" height="3.8" fill="#fff"/><rect x="1.2" y="6.1" width="5.6" height="3.8" fill="#fff"/><rect x="1.2" y="11" width="5.6" height="3.8" fill="#fff"/><path d="M4.6 12.6 L9.6 17.4 M9.6 12.6 L4.6 17.4" stroke="#c0505a" stroke-width="2"/></svg>
<div class="t" style="left:1326.5px;top:112.14px;width:140px;text-align:center;font-size:12px;color:#111;font-weight:normal;">Параметры</div>
<div class="a" style="left:1364px;top:137px;width:98px;height:20px;background:#fff;border:1px solid #b0b4b9"></div>
<div class="t " style="left:1369.2px;top:142.24px;font-size:12px;color:#111;font-weight:normal;">Тонкая</div>
<svg class="a" style="left:1450.6px;top:146px;" width="6" height="5" viewBox="0 0 6 5"><path d="M0 0H6L3 5Z" fill="#111"/></svg>
<div class="a" style="left:1364px;top:167px;width:98px;height:20px;background:#fff;border:1px solid #b0b4b9"></div>
<div class="t " style="left:1369.2px;top:172.24px;font-size:12px;color:#111;font-weight:normal;">Толстая</div>
<svg class="a" style="left:1450.6px;top:176px;" width="6" height="5" viewBox="0 0 6 5"><path d="M0 0H6L3 5Z" fill="#111"/></svg>
<div class="a" style="left:1364px;top:197px;width:98px;height:20px;background:#fff;border:1px solid #b0b4b9"></div>
<div class="t " style="left:1369.2px;top:202.24px;font-size:12px;color:#111;font-weight:normal;">Толстая</div>
<svg class="a" style="left:1450.6px;top:206px;" width="6" height="5" viewBox="0 0 6 5"><path d="M0 0H6L3 5Z" fill="#111"/></svg>
<svg class="a" style="left:1339px;top:142px;" width="17" height="11" viewBox="0 0 17 11"><rect x="0" y="0" width="17" height="2.2" fill="#000"/><rect x="0" y="8.6" width="17" height="2.2" fill="#000"/><rect x="0.5" y="2" width="16" height="6.8" fill="#fff" stroke="#777" stroke-width="0.6" stroke-dasharray="1 1"/></svg>
<svg class="a" style="left:1339px;top:171.5px;" width="17" height="12" viewBox="0 0 17 12"><rect x="1" y="0.5" width="15" height="10.5" fill="#fff" stroke="#555" stroke-width="0.7" stroke-dasharray="1 1"/><rect x="0" y="0" width="2.3" height="11.5" fill="#000"/><rect x="14.7" y="0" width="2.3" height="11.5" fill="#000"/></svg>
<svg class="a" style="left:1339px;top:201.8px;" width="17" height="12" viewBox="0 0 17 12"><rect x="1.1" y="1.1" width="14.8" height="9.2" fill="#fff" stroke="#000" stroke-width="2.2"/></svg>
<svg class="a" style="left:1339px;top:229px;" width="18" height="15" viewBox="0 0 18 15"><path d="M3.4 14 V2 M0.2 5.2 L3.4 1.4 L6.6 5.2" stroke="#6e7c88" stroke-width="2" fill="none"/><path d="M13.4 1 V13 M10.2 9.8 L13.4 13.6 L16.6 9.8" stroke="#6e7c88" stroke-width="2" fill="none"/></svg>
<div class="t " style="left:1365px;top:231.84px;font-size:12px;color:#111;font-weight:normal;">Сортировать</div>
<svg class="a" style="left:1451px;top:235.5px;" width="6" height="5" viewBox="0 0 6 5"><path d="M0 0H6L3 5Z" fill="#111"/></svg>
<div class="t" style="left:1326.5px;top:275.24px;width:140px;text-align:center;font-size:12px;color:#111;font-weight:normal;">Форматирование</div>
<div class="a" style="left:1364px;top:299px;width:98px;height:20px;background:#fff;border:1px solid #b0b4b9"></div>
<div class="t " style="left:1369.2px;top:304.24px;font-size:12px;color:#111;font-weight:normal;">GOST A</div>
<svg class="a" style="left:1450.6px;top:308px;" width="6" height="5" viewBox="0 0 6 5"><path d="M0 0H6L3 5Z" fill="#111"/></svg>
<div class="a" style="left:1364px;top:329px;width:98px;height:20px;background:#fff;border:1px solid #b0b4b9"></div>
<div class="t " style="left:1369.2px;top:334.24px;font-size:12px;color:#111;font-weight:normal;">3,50</div>
<div class="t" style="left:1059.5px;top:334.24px;width:400px;text-align:right;font-size:12px;color:#9b9b9b;font-weight:normal;">мм</div>
<div class="a" style="left:1364px;top:359px;width:98px;height:20px;background:#fff;border:1px solid #b0b4b9"></div>
<div class="t " style="left:1369.2px;top:364.24px;font-size:12px;color:#111;font-weight:normal;">Обычный</div>
<svg class="a" style="left:1450.6px;top:368px;" width="6" height="5" viewBox="0 0 6 5"><path d="M0 0H6L3 5Z" fill="#111"/></svg>
<div class="a" style="left:1364px;top:389px;width:98px;height:20px;background:#fff;border:1px solid #b0b4b9"></div>
<div class="t " style="left:1369.2px;top:394.24px;font-size:12px;color:#111;font-weight:normal;">По центру</div>
<svg class="a" style="left:1450.6px;top:398px;" width="6" height="5" viewBox="0 0 6 5"><path d="M0 0H6L3 5Z" fill="#111"/></svg>
<div class="a" style="left:1364px;top:419px;width:98px;height:20px;background:#fff;border:1px solid #b0b4b9"></div>
<div class="t " style="left:1369.2px;top:424.24px;font-size:12px;color:#111;font-weight:normal;">По середине</div>
<svg class="a" style="left:1450.6px;top:428px;" width="6" height="5" viewBox="0 0 6 5"><path d="M0 0H6L3 5Z" fill="#111"/></svg>
<div class="a" style="left:1364px;top:449px;width:98px;height:20px;background:#fff;border:1px solid #b0b4b9"></div>
<div class="t " style="left:1369.2px;top:454.24px;font-size:12px;color:#111;font-weight:normal;">20,00</div>
<div class="t" style="left:1059.5px;top:454.24px;width:400px;text-align:right;font-size:12px;color:#9b9b9b;font-weight:normal;">мм</div>
<div class="a" style="left:1364px;top:479px;width:98px;height:20px;background:#fff;border:1px solid #b0b4b9"></div>
<div class="t " style="left:1369.2px;top:484.24px;font-size:12px;color:#111;font-weight:normal;">20,00</div>
<div class="t" style="left:1059.5px;top:484.24px;width:400px;text-align:right;font-size:12px;color:#9b9b9b;font-weight:normal;">мм</div>
<div class="t" style="left:1339px;top:300.5px;font-family:'Liberation Serif',serif;font-weight:bold;font-size:17.5px;color:#6c7c8a;transform:scaleX(1.0);letter-spacing:0.3px">FF</div>
<div class="t" style="left:1338.6px;top:330.8px;font-family:'Liberation Sans',sans-serif;font-weight:bold;font-size:16px;color:#6c7c8a">T</div>
<svg class="a" style="left:1348.5px;top:333.5px;" width="6" height="11" viewBox="0 0 6 11"><path d="M0.2 0.6 H5.8 M0.2 10.4 H5.8 M3 1 V10 M1 3.2 L3 1 L5 3.2 M1 7.8 L3 10 L5 7.8" stroke="#111" stroke-width="1.2" fill="none"/></svg>
<div class="t" style="left:1338.8px;top:360.3px;font-family:'Liberation Sans',sans-serif;font-weight:bold;font-size:16.5px;color:#6c7c8a">B<span style="font-family:'Liberation Serif',serif;font-style:italic">i</span></div>
<svg class="a" style="left:1335px;top:388px;" width="24" height="22" viewBox="0 0 24 22"><rect x="9.8" y="0.5" width="13.5" height="11.5" fill="#fff" stroke="#6d7378" stroke-width="1"/><path d="M13 3.5 H21 M15 5.8 H21 M13 8 H21" stroke="#222" stroke-width="1"/><rect x="0.5" y="9" width="14.5" height="12.5" fill="#fff" stroke="#6d7378" stroke-width="1"/><path d="M3 12.3 H11 M3 14.6 H9 M3 16.9 H11" stroke="#222" stroke-width="1"/></svg>
<svg class="a" style="left:1338px;top:419px;" width="17" height="18" viewBox="0 0 17 18"><path d="M0.6 9.3 H16" stroke="#444" stroke-width="0.8"/><path d="M8.4 1 V7" stroke="#111" stroke-width="1.3"/><path d="M6.2 5 L8.4 7.8 L10.6 5Z" fill="#111"/><path d="M8.4 17.2 V11.6" stroke="#111" stroke-width="1.3"/><path d="M6.2 13.6 L8.4 10.8 L10.6 13.6Z" fill="#111"/></svg>
<svg class="a" style="left:1339px;top:453px;" width="17" height="11" viewBox="0 0 17 11"><rect x="0.5" y="0.5" width="16" height="10" fill="#fff" stroke="#555" stroke-width="1"/><path d="M2.5 5.5 H14.5 M4.6 3.4 L2.3 5.5 L4.6 7.6 M12.4 3.4 L14.7 5.5 L12.4 7.6" stroke="#111" stroke-width="1.2" fill="none"/></svg>
<svg class="a" style="left:1339px;top:483px;" width="17" height="11" viewBox="0 0 17 11"><rect x="0.5" y="0.5" width="16" height="10" fill="#fff" stroke="#555" stroke-width="1"/><path d="M8.5 2 V9 M6.5 3.8 L8.5 1.8 L10.5 3.8 M6.5 7.2 L8.5 9.2 L10.5 7.2" stroke="#111" stroke-width="1.2" fill="none"/></svg>
</body></html>
